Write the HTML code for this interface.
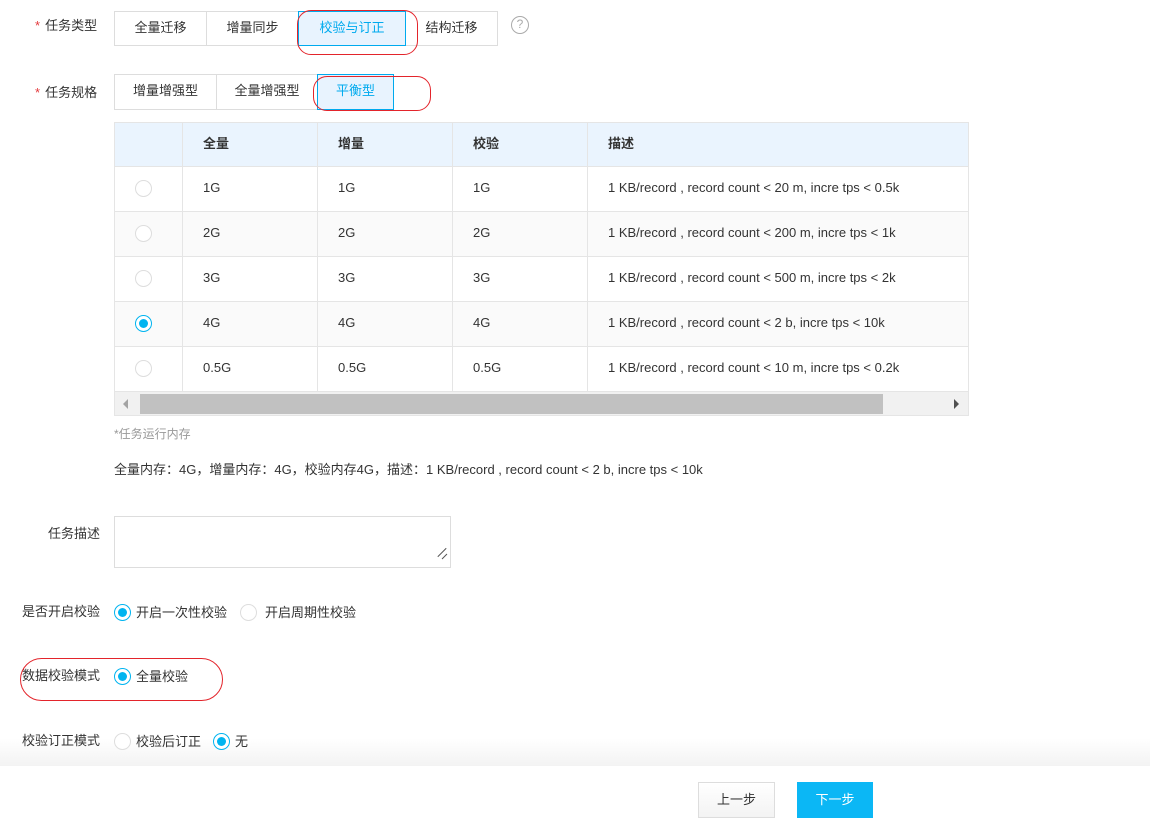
<!DOCTYPE html>
<html><head><meta charset="utf-8"><style>
*{box-sizing:border-box;margin:0;padding:0}
body{width:1150px;height:830px;position:relative;background:#fff;font-family:"Liberation Sans","Noto Sans CJK SC",sans-serif;font-size:13px;color:#333;overflow:hidden}
.a{position:absolute}
.lbl{position:absolute;font-size:13px;color:#333;white-space:nowrap;line-height:16px}
.star{color:#e4393c;margin-right:5px}
.btn{position:absolute;border:1px solid #ddd;background:#fff;text-align:center;font-size:13px;color:#333}
.sel{background:#e8f3fe;border:1px solid #00aaee;color:#00aaee;z-index:2}
.red{position:absolute;border:1.5px solid #e3242b;border-radius:14px;z-index:3}
.radio{position:absolute;width:17px;height:17px;border:1px solid #ddd;border-radius:50%;background:#fff}
.radio.on{border:1px solid #00b4f0}
.radio.on::after{content:"";position:absolute;left:3px;top:3px;width:9px;height:9px;border-radius:50%;background:#00b4f0}
table{border-collapse:collapse;position:absolute;left:114px;top:122px;width:855px;table-layout:fixed}
td,th{border:1px solid #e5e5e5;height:45px;padding-left:20px;padding-bottom:3px;text-align:left;font-size:13px;color:#333;position:relative}
th{background:#eaf4fe;height:44px;font-weight:bold;color:#333;padding-bottom:4px}
tr.g td{background:#fafafa}
</style></head><body>
<div class="lbl" style="left:35px;top:18px"><span class="star">*</span>任务类型</div>
<div class="btn" style="left:114px;top:11px;width:93px;height:35px;line-height:31px">全量迁移</div>
<div class="btn" style="left:206px;top:11px;width:93px;height:35px;line-height:31px">增量同步</div>
<div class="btn sel" style="left:298px;top:11px;width:108px;height:35px;line-height:31px">校验与订正</div>
<div class="btn" style="left:405px;top:11px;width:93px;height:35px;line-height:31px">结构迁移</div>
<div class="a" style="left:511px;top:16px;width:18px;height:18px;border:1.5px solid #aaa;border-radius:50%;color:#aaa;font-size:12px;text-align:center;line-height:15px">?</div>
<div class="red" style="left:297px;top:10px;width:121px;height:45px"></div>

<div class="lbl" style="left:35px;top:85px"><span class="star">*</span>任务规格</div>
<div class="btn" style="left:114px;top:74px;width:103px;height:36px;line-height:31px">增量增强型</div>
<div class="btn" style="left:216px;top:74px;width:102px;height:36px;line-height:31px">全量增强型</div>
<div class="btn sel" style="left:317px;top:74px;width:77px;height:36px;line-height:31px">平衡型</div>
<div class="red" style="left:313px;top:76px;width:118px;height:35px"></div>

<table>
<colgroup><col style="width:68px"><col style="width:135px"><col style="width:135px"><col style="width:135px"><col></colgroup>
<tr><th></th><th>全量</th><th>增量</th><th>校验</th><th>描述</th></tr>
<tr><td><span class="radio" style="left:20px;top:13px"></span></td><td>1G</td><td>1G</td><td>1G</td><td>1 KB/record , record count &lt; 20 m, incre tps &lt; 0.5k</td></tr>
<tr class="g"><td><span class="radio" style="left:20px;top:13px"></span></td><td>2G</td><td>2G</td><td>2G</td><td>1 KB/record , record count &lt; 200 m, incre tps &lt; 1k</td></tr>
<tr><td><span class="radio" style="left:20px;top:13px"></span></td><td>3G</td><td>3G</td><td>3G</td><td>1 KB/record , record count &lt; 500 m, incre tps &lt; 2k</td></tr>
<tr class="g"><td><span class="radio on" style="left:20px;top:13px"></span></td><td>4G</td><td>4G</td><td>4G</td><td>1 KB/record , record count &lt; 2 b, incre tps &lt; 10k</td></tr>
<tr><td><span class="radio" style="left:20px;top:13px"></span></td><td>0.5G</td><td>0.5G</td><td>0.5G</td><td>1 KB/record , record count &lt; 10 m, incre tps &lt; 0.2k</td></tr>
</table>
<div class="a" style="left:114px;top:391px;width:855px;height:25px;background:#f1f1f1;border:1px solid #e5e5e5"></div>
<div class="a" style="left:140px;top:394px;width:743px;height:20px;background:#c1c1c1"></div>
<div class="a" style="left:123px;top:399px;width:0;height:0;border-top:5px solid transparent;border-bottom:5px solid transparent;border-right:5px solid #a3a3a3"></div>
<div class="a" style="left:954px;top:399px;width:0;height:0;border-top:5px solid transparent;border-bottom:5px solid transparent;border-left:5px solid #505050"></div>

<div class="lbl" style="left:114px;top:426px;color:#999;font-size:12px">*任务运行内存</div>
<div class="lbl" style="left:114px;top:462px">全量内存：4G，增量内存：4G，校验内存4G，描述：1 KB/record , record count &lt; 2 b, incre tps &lt; 10k</div>

<div class="lbl" style="left:48px;top:526px">任务描述</div>
<div class="a" style="left:114px;top:516px;width:337px;height:52px;border:1px solid #ddd"></div>
<div class="a" style="left:436px;top:552px;width:12px;height:1px;background:#555;transform:rotate(-45deg)"></div>
<div class="a" style="left:441px;top:556px;width:7px;height:1px;background:#555;transform:rotate(-45deg)"></div>

<div class="lbl" style="left:22px;top:604px">是否开启校验</div>
<span class="radio on" style="left:114px;top:604px"></span>
<div class="lbl" style="left:136px;top:605px">开启一次性校验</div>
<span class="radio" style="left:240px;top:604px"></span>
<div class="lbl" style="left:265px;top:605px">开启周期性校验</div>

<div class="lbl" style="left:22px;top:668px">数据校验模式</div>
<span class="radio on" style="left:114px;top:668px"></span>
<div class="lbl" style="left:136px;top:669px">全量校验</div>
<div class="red" style="left:20px;top:658px;width:203px;height:43px;border-radius:22px"></div>

<div class="a" style="left:0;top:738px;width:1150px;height:28px;background:linear-gradient(#fff,#f3f3f3)"></div>
<div class="lbl" style="left:22px;top:733px">校验订正模式</div>
<span class="radio" style="left:114px;top:733px"></span>
<div class="lbl" style="left:136px;top:734px">校验后订正</div>
<span class="radio on" style="left:213px;top:733px"></span>
<div class="lbl" style="left:235px;top:734px">无</div>

<div class="a" style="left:698px;top:782px;width:77px;height:36px;border:1px solid #ddd;background:linear-gradient(#fff,#f3f3f3);text-align:center;line-height:34px">上一步</div>
<div class="a" style="left:797px;top:782px;width:76px;height:36px;background:#0bb7f5;color:#fff;text-align:center;line-height:36px">下一步</div>
</body></html>
